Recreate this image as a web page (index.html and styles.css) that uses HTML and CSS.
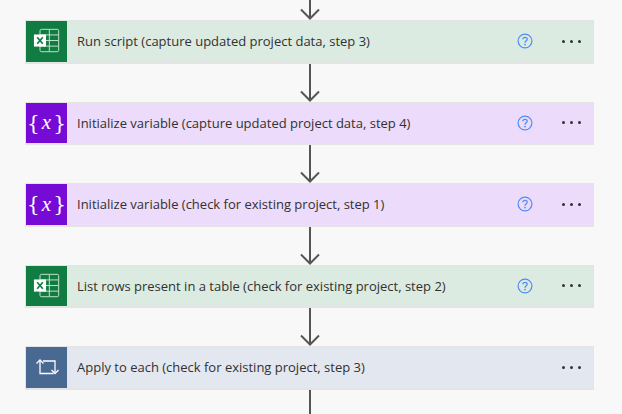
FILE: index.html
```html
<!DOCTYPE html>
<html lang="en">
<head>
  <meta charset="UTF-8" />
  <meta name="viewport" content="width=device-width, initial-scale=1.0"/>
  <title>Flow steps</title>
  <link rel="stylesheet" href="styles.css">
</head>
<body>

  <!-- Shared icons -->
  <svg class="defs" width="0" height="0">
    <symbol id="arrow" viewBox="0 0 24 38">
      <path d="M12 0V36M3 27.5L12 36.5L21 27.5" fill="none" stroke="#555" stroke-width="2"/>
    </symbol>
    <symbol id="excel" viewBox="0 0 30 30">
      <rect x="7.5" y="2.5" width="20" height="24" rx="1.5" fill="none" stroke="#cfe6d8" stroke-width="1"/>
      <path d="M17.5 3V26M8 8.500H27M8 14.500H27M8 20.500H27" fill="none" stroke="#cfe6d8" stroke-width="1"/>
      <rect x="1" y="8" width="13" height="13" fill="#fff"/>
      <path d="M4.500 11L10.500 18M10.500 11L4.500 18" fill="none" stroke="#107c41" stroke-width="1.800"/>
    </symbol>
    <symbol id="loop" viewBox="0 0 24 20">
      <path d="M5 4V16.500H18.500M5 4M8 4H20V15" fill="none" stroke="#fff" stroke-width="1.300"/>
      <path d="M1.500 6.500L5 3L8.500 6.500M16.500 13L20 16.500L23.500 13" fill="none" stroke="#fff" stroke-width="1.300"/>
    </symbol>
    <symbol id="help" viewBox="0 0 16 16">
      <circle cx="8" cy="8" r="6.900" fill="none" stroke="#4f8df5" stroke-width="1.200"/>
      <path d="M5.900 6.300C5.900 3.600 10.200 3.700 10.200 6.200C10.200 7.900 8 7.800 8 9.700" fill="none" stroke="#4f8df5" stroke-width="1.300"/>
      <circle cx="8" cy="11.600" r="0.900" fill="#4f8df5"/>
    </symbol>
  </svg>

  <div class="flow">
    <svg class="arrow"><use href="#arrow"/></svg>

    <div class="card green">
      <div class="tile"><svg class="ico-excel"><use href="#excel"/></svg></div>
      <div class="text">Run script (capture updated project data, step 3)</div>
      <svg class="help"><use href="#help"/></svg>
      <div class="more"><span></span><span></span><span></span></div>
    </div>
    <svg class="arrow"><use href="#arrow"/></svg>

    <div class="card purple">
      <div class="tile"><span class="brace">{</span><span class="var">x</span><span class="brace">}</span></div>
      <div class="text">Initialize variable (capture updated project data, step 4)</div>
      <svg class="help"><use href="#help"/></svg>
      <div class="more"><span></span><span></span><span></span></div>
    </div>
    <svg class="arrow"><use href="#arrow"/></svg>

    <div class="card purple">
      <div class="tile"><span class="brace">{</span><span class="var">x</span><span class="brace">}</span></div>
      <div class="text">Initialize variable (check for existing project, step 1)</div>
      <svg class="help"><use href="#help"/></svg>
      <div class="more"><span></span><span></span><span></span></div>
    </div>
    <svg class="arrow"><use href="#arrow"/></svg>

    <div class="card green">
      <div class="tile"><svg class="ico-excel"><use href="#excel"/></svg></div>
      <div class="text">List rows present in a table (check for existing project, step 2)</div>
      <svg class="help"><use href="#help"/></svg>
      <div class="more"><span></span><span></span><span></span></div>
    </div>
    <svg class="arrow"><use href="#arrow"/></svg>

    <div class="card blue">
      <div class="tile"><svg class="ico-loop"><use href="#loop"/></svg></div>
      <div class="text">Apply to each (check for existing project, step 3)</div>
      <div class="more"><span></span><span></span><span></span></div>
    </div>
    <svg class="arrow"><use href="#arrow"/></svg>
  </div>

</body>
</html>
```

FILE: styles.css
```css
* {
  box-sizing: border-box;
  margin: 0;
  padding: 0;
}

html, body {
  height: 100%;
  overflow: hidden;
}

body {
  font-family: "Open Sans", sans-serif;
  background: #f8f8f8;
}

.defs {
  display: block;
  height: 0;
}

.flow {
  display: flex;
  flex-direction: column;
  align-items: center;
  width: 569px;
  margin-left: 25px;
  margin-top: -18px;
}

.arrow {
  display: block;
  flex: none;
  width: 24px;
  height: 38px;
}

.card {
  display: flex;
  align-items: center;
  flex: none;
  width: 100%;
  height: 43.5px;
  border: 1px solid #e4e4e4;
  border-bottom-width: 2px;
}

.green { background: #dcebe1; }
.purple { background: #ecdbfa; }
.blue { background: #e3e7f0; }

.tile {
  display: flex;
  align-items: center;
  justify-content: center;
  flex: none;
  align-self: stretch;
  width: 42px;
  color: #fff;
  border-right: 1px solid #e4e4e4;
}

.green .tile { background: #107c41; }
.purple .tile { background: #770bd6; }
.blue .tile { background: #486991; }

.ico-excel {
  width: 28px;
  height: 28px;
}

.ico-loop {
  width: 24px;
  height: 20px;
}

.brace {
  font-family: "DejaVu Serif", serif;
  font-size: 20px;
  line-height: 1;
}

.var {
  font-family: "Liberation Serif", serif;
  font-style: italic;
  font-size: 21px;
  line-height: 1;
  margin: 0 2px;
}

.text {
  flex: 1;
  padding-left: 9px;
  font-size: 13px;
  color: #323130;
  white-space: nowrap;
}

.help {
  flex: none;
  width: 16px;
  height: 16px;
  margin-right: 29px;
}

.more {
  display: flex;
  flex: none;
  gap: 5px;
  margin-right: 12px;
}

.more span {
  width: 3px;
  height: 3px;
  border-radius: 50%;
  background: #333;
}
```
